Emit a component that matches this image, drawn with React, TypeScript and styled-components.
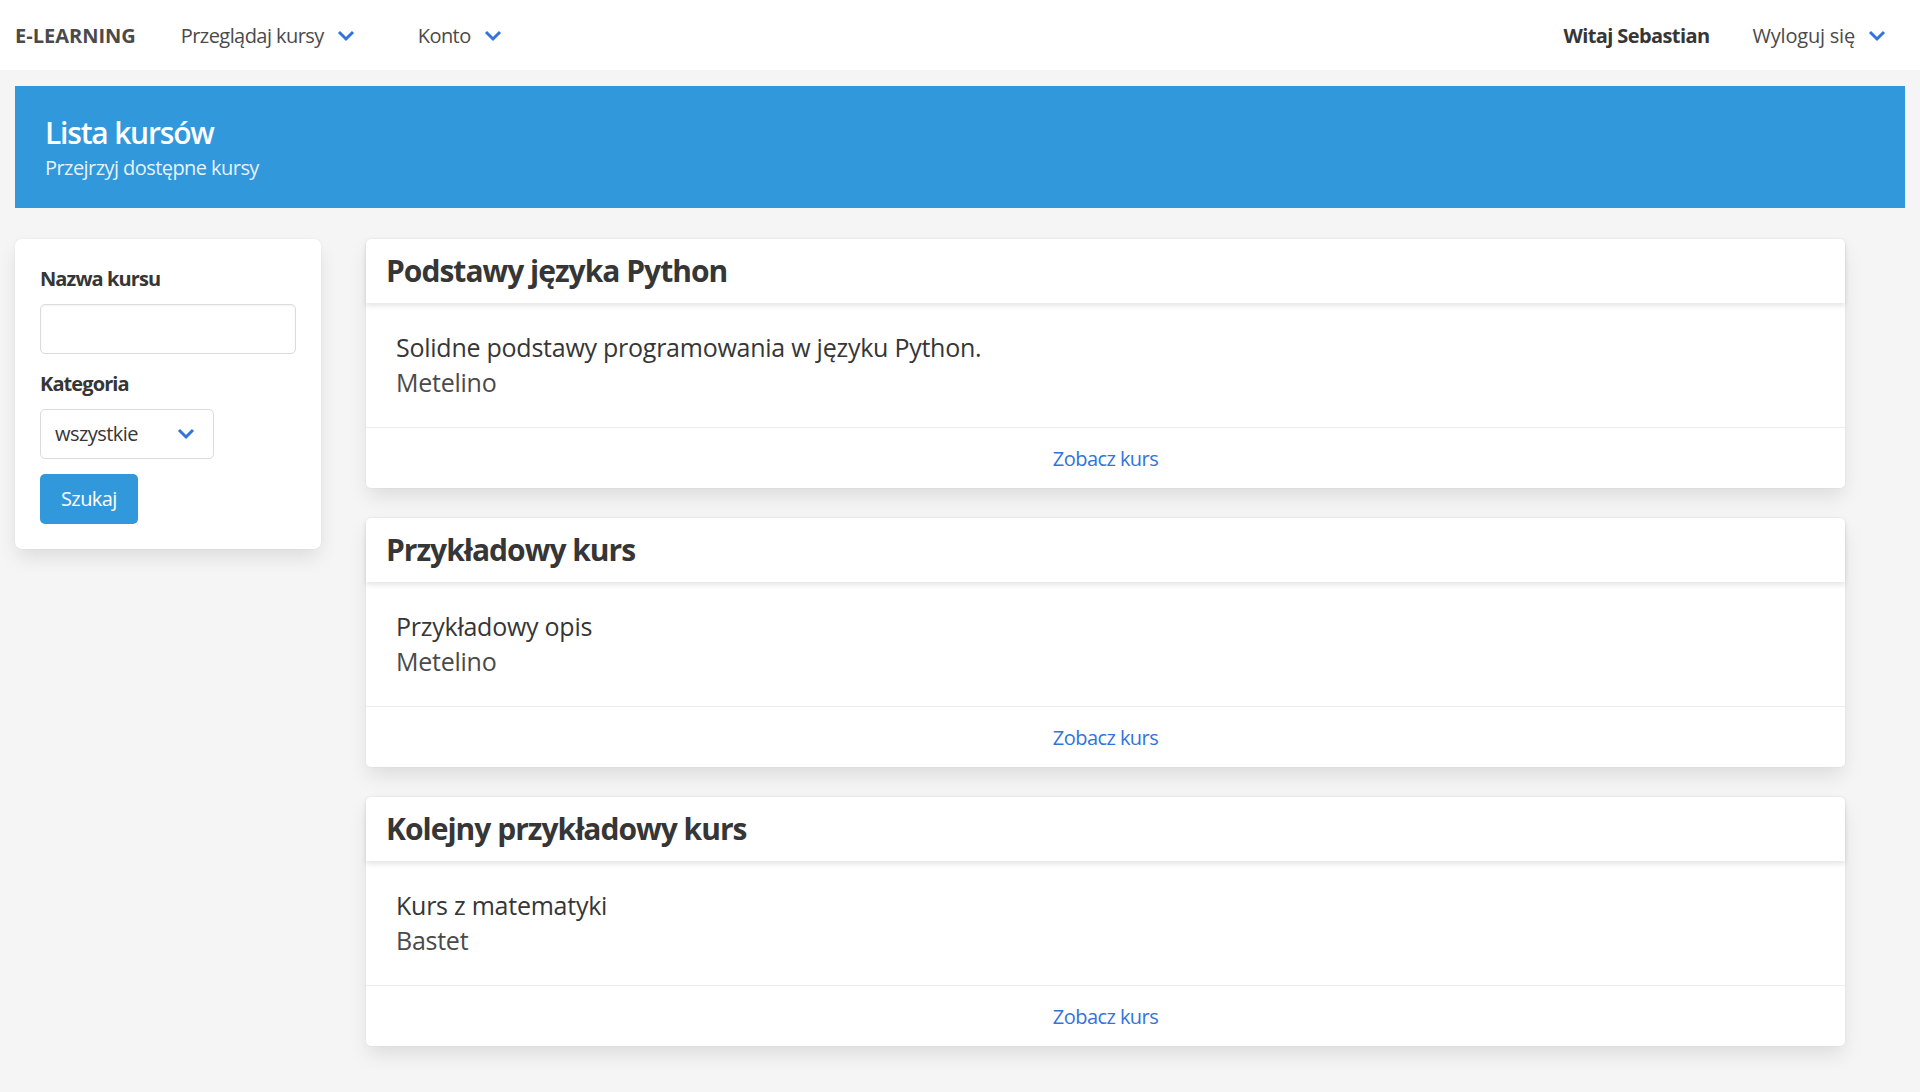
import React from "react";
import styled, { createGlobalStyle } from "styled-components";

const GlobalStyle = createGlobalStyle`
  html, body { margin: 0; padding: 0; }
  body {
    background: #f5f5f5;
    font-family: "Segoe UI", "Open Sans", "Noto Sans", sans-serif;
    font-size: 20px;
    line-height: 1.5;
    letter-spacing: -0.028em;
    color: #4a4a4a;
  }
  * { box-sizing: border-box; }
`;

const Navbar = styled.nav`
  height: 70px;
  background: #fff;
  display: flex;
  align-items: center;
  padding: 1px 34px 0 15px;
`;

const Brand = styled.div`
  font-weight: 700;
  color: #4a4a4a;
  margin-right: 45px;
  letter-spacing: 0;
`;

const NavLink = styled.div<{ $gap?: number; $spacing?: string }>`
  display: flex;
  align-items: center;
  gap: 13px;
  color: #4a4a4a;
  margin-right: ${(p) => p.$gap ?? 0}px;
  letter-spacing: ${(p) => p.$spacing ?? "inherit"};
`;

const NavRight = styled.div`
  margin-left: auto;
  display: flex;
  align-items: center;
`;

const Greeting = styled.div`
  font-weight: 700;
  color: #363636;
  margin-right: 43px;
  letter-spacing: -0.03em;
`;

const Chevron = ({ color = "#3273dc" }: { color?: string }) => (
  <svg width="18" height="12" viewBox="0 0 18 12" style={{ display: "block" }}>
    <polyline
      points="2,2 9,9 16,2"
      fill="none"
      stroke={color}
      strokeWidth="3"
      strokeLinejoin="miter"
    />
  </svg>
);

const Main = styled.main`
  padding: 16px 15px 0;
`;

const Hero = styled.section`
  background: #3298dc;
  padding: 30px 30px 28px;
`;

const HeroTitle = styled.h1`
  margin: 0;
  font-size: 30px;
  line-height: 1.125;
  font-weight: 600;
  letter-spacing: -0.04em;
  color: #fff;
`;

const HeroSubtitle = styled.p`
  margin: 5px 0 0;
  font-size: 20px;
  line-height: 1.25;
  color: rgba(255, 255, 255, 0.9);
`;

const Content = styled.div`
  display: flex;
  align-items: flex-start;
  gap: 45px;
  margin-top: 31px;
`;

const Sidebar = styled.aside`
  width: 306px;
  flex: none;
  background: #fff;
  border-radius: 7px;
  padding: 25px;
  box-shadow: 0 10px 20px -2.5px rgba(10, 10, 10, 0.1),
    0 0 0 1px rgba(10, 10, 10, 0.02);
`;

const Field = styled.div`
  margin-bottom: 15px;
  &:last-child { margin-bottom: 0; }
`;

const Label = styled.label`
  display: block;
  font-weight: 700;
  color: #363636;
  margin-bottom: 10px;
  letter-spacing: -0.045em;
`;

const Input = styled.input`
  display: block;
  width: 100%;
  height: 50px;
  border: 1px solid #dbdbdb;
  border-radius: 5px;
  box-shadow: inset 0 1px 2px rgba(10, 10, 10, 0.05);
  font: inherit;
  padding: 0 14px;
  outline: none;
  background: #fff;
`;

const SelectBox = styled.div`
  width: 174px;
  height: 50px;
  border: 1px solid #dbdbdb;
  border-radius: 5px;
  display: flex;
  align-items: center;
  justify-content: space-between;
  padding: 0 18px 0 14px;
  color: #363636;
  background: #fff;
`;

const Button = styled.button`
  height: 50px;
  padding: 0 20px;
  border: 1px solid transparent;
  border-radius: 5px;
  background: #3298dc;
  color: #fff;
  font: inherit;
  letter-spacing: -0.03em;
  cursor: pointer;
`;

const CardList = styled.div`
  width: 1479px;
  display: flex;
  flex-direction: column;
  gap: 30px;
  padding-bottom: 30px;
`;

const Card = styled.article`
  background: #fff;
  border-radius: 5px;
  box-shadow: 0 10px 20px -2.5px rgba(10, 10, 10, 0.1),
    0 0 0 1px rgba(10, 10, 10, 0.02);
  color: #4a4a4a;
`;

const CardHeader = styled.header`
  display: flex;
  align-items: center;
  padding: 15px 20px;
  box-shadow: 0 2.5px 5px rgba(10, 10, 10, 0.1);
  border-radius: 5px 5px 0 0;
`;

const CardTitle = styled.h2`
  margin: 0;
  font-size: 30px;
  line-height: 1.125;
  font-weight: 700;
  letter-spacing: -0.033em;
  color: #363636;
`;

const CardBody = styled.div`
  padding: 30px 30px 29px;
`;

const CourseDesc = styled.p`
  margin: 0;
  font-size: 25px;
  line-height: 1.125;
  letter-spacing: -0.01em;
  color: #363636;
`;

const CourseAuthor = styled.p`
  margin: 6px 0 0;
  font-size: 25px;
  line-height: 1.25;
  letter-spacing: -0.01em;
  color: #4a4a4a;
`;

const CardFooter = styled.footer`
  border-top: 1px solid #ededed;
  display: flex;
`;

const FooterLink = styled.a`
  flex: 1;
  text-align: center;
  padding: 16px 15px 14px;
  color: #3273dc;
  text-decoration: none;
  line-height: 30px;
`;

const courses = [
  {
    title: "Podstawy języka Python",
    desc: "Solidne podstawy programowania w języku Python.",
    author: "Metelino",
  },
  { title: "Przykładowy kurs", desc: "Przykładowy opis", author: "Metelino" },
  {
    title: "Kolejny przykładowy kurs",
    desc: "Kurs z matematyki",
    author: "Bastet",
  },
];

export default function App() {
  return (
    <>
      <GlobalStyle />
      <Navbar>
        <Brand>E-LEARNING</Brand>
        <NavLink $gap={63}>
          Przeglądaj kursy <Chevron />
        </NavLink>
        <NavLink>
          Konto <Chevron />
        </NavLink>
        <NavRight>
          <Greeting>Witaj Sebastian</Greeting>
          <NavLink $spacing="-0.01em">
            Wyloguj się <Chevron />
          </NavLink>
        </NavRight>
      </Navbar>
      <Main>
        <Hero>
          <HeroTitle>Lista kursów</HeroTitle>
          <HeroSubtitle>Przejrzyj dostępne kursy</HeroSubtitle>
        </Hero>
        <Content>
          <Sidebar>
            <Field>
              <Label>Nazwa kursu</Label>
              <Input type="text" />
            </Field>
            <Field>
              <Label>Kategoria</Label>
              <SelectBox>
                wszystkie <Chevron />
              </SelectBox>
            </Field>
            <Field>
              <Button>Szukaj</Button>
            </Field>
          </Sidebar>
          <CardList>
            {courses.map((c) => (
              <Card key={c.title}>
                <CardHeader>
                  <CardTitle>{c.title}</CardTitle>
                </CardHeader>
                <CardBody>
                  <CourseDesc>{c.desc}</CourseDesc>
                  <CourseAuthor>{c.author}</CourseAuthor>
                </CardBody>
                <CardFooter>
                  <FooterLink href="#">Zobacz kurs</FooterLink>
                </CardFooter>
              </Card>
            ))}
          </CardList>
        </Content>
      </Main>
    </>
  );
}
